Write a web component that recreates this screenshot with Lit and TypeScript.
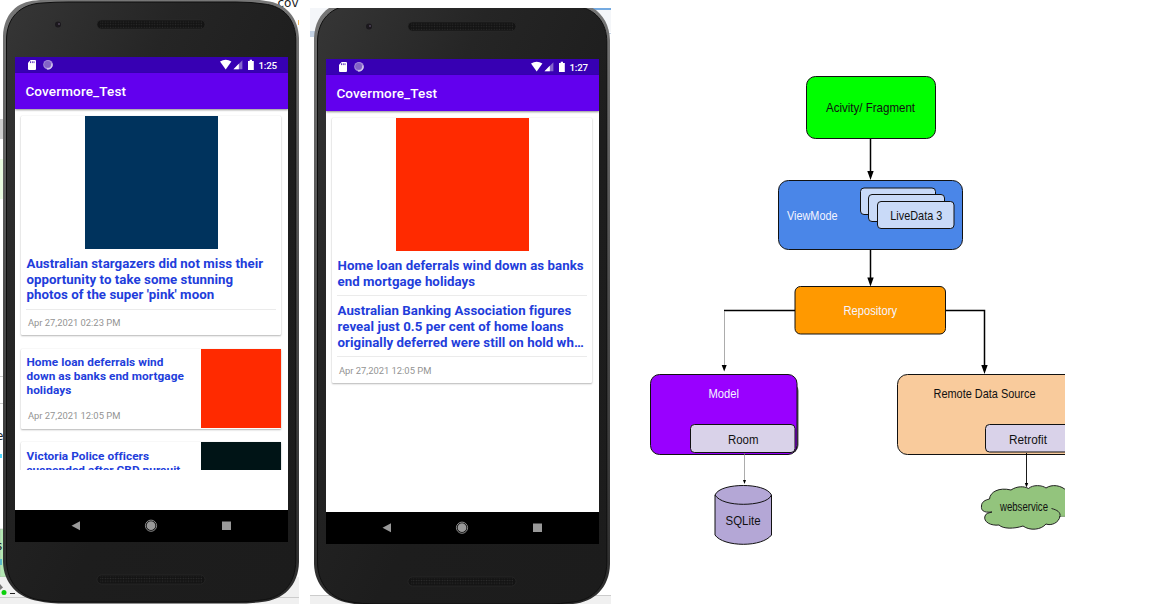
import { LitElement, html, css, svg, nothing } from "lit";
import { customElement, property } from "lit/decorators.js";

interface Story {
  image: string;
  title: string[];
  summary?: string[];
  date: string;
  compact?: boolean;
}

@customElement("news-card")
class NewsCard extends LitElement {
  @property({ attribute: false }) story!: Story;

  static styles = css`
    :host { display: block; flex: none; }
    .card { width: 260px; background: #fff; box-shadow: 0 1px 2px rgba(0,0,0,.28), 0 0 1px rgba(0,0,0,.16); border-radius: 1px; box-sizing: border-box; }
    .full { padding-bottom: 6px; }
    .photo { width: 133px; height: 133px; margin: 0 auto; }
    .lines { color: #223ddb; font-weight: 700; white-space: nowrap; font-size: 13.25px; letter-spacing: .06px; line-height: 15.7px; padding: 7px 0 5.4px 5.1px; }
    .lines.second { padding-top: 7.5px; padding-bottom: 6px; }
    .rule { height: 1px; background: #ebebeb; margin: 0 5px 0 5px; }
    .date { color: #939393; font-size: 9.4px; line-height: 12px; padding: 7.6px 0 0 6.5px; white-space: nowrap; }
    .row { display: flex; height: 80px; }
    .row .copy { width: 180px; display: flex; flex-direction: column; }
    .row .lines { font-size: 11.8px; line-height: 14px; padding: 6.6px 0 0 5.1px; }
    .row .date { padding-top: 12.6px; }
    .thumb { width: 80px; height: 79px; }
  `;

  render() {
    const s = this.story;
    const lines = (l: string[]) => l.map((t) => html`<div>${t}</div>`);
    if (s.compact) {
      return html`<div class="card row">
        <div class="copy"><div class="lines">${lines(s.title)}</div><div class="date">${s.date}</div></div>
        <div class="thumb" style="background:${s.image}"></div>
      </div>`;
    }
    return html`<div class="card full">
      <div class="photo" style="background:${s.image}"></div>
      <div class="lines">${lines(s.title)}</div>
      <div class="rule"></div>
      ${s.summary ? html`<div class="lines second">${lines(s.summary)}</div><div class="rule"></div>` : nothing}
      <div class="date">${s.date}</div>
    </div>`;
  }
}

@customElement("phone-frame")
class PhoneFrame extends LitElement {
  @property() time = "";
  @property({ attribute: false }) stories: Story[] = [];

  static styles = css`
    :host { display: block; width: 299px; height: 604px; font-family: Roboto, sans-serif; }
    .phone { display: grid; width: 299px; height: 604px; }
    .shell, .inner { grid-area: 1 / 1; }
    .shell { display: block; }
    .inner { padding: 57px 11px 62px 15px; }
    .screen { width: 273px; height: 485px; background: #fff; display: flex; flex-direction: column; overflow: hidden; }
    .status { height: 16px; flex: none; background: #3700b3; }
    .status svg { display: block; }
    .clock { font: 500 9.8px Roboto, sans-serif; fill: #fff; }
    .bar { height: 36px; flex: none; background: #6200ee; box-shadow: 0 1px 2px rgba(0,0,0,.45); color: #fff; font-weight: 500; font-size: 13.5px; letter-spacing: .16px; line-height: 37px; padding-left: 10.4px; }
    .feed { height: 361px; flex: none; overflow: hidden; display: flex; flex-direction: column; gap: 13.6px; padding: 7px 0 0 6.4px; box-sizing: border-box; }
    .nav { height: 32px; flex: none; margin-top: auto; background: #000; }
    .nav svg { display: block; }
  `;

  render() {
    const body = "M3 36 C4 14 17 1.5 36 .5 Q45 -.8 62 -1 L240 -1 Q258 -.8 266 1 C286 3 298.5 18 299 38 V562 C298.5 586 283 600 262 602 Q250 603.6 236 603.6 H66 Q50 603.6 38 601 C18 598 3.5 583 3 562Z";
    const speaker = (y: number) => svg`<rect x="97" y=${y} width="108" height="9" rx="4.5" fill="#141414" stroke="#2d2d2d" stroke-width=".6"/>
      <rect x="100" y=${y + 1} width="102" height="7" fill="url(#dots)"/>`;
    return html`<div class="phone">
      <svg class="shell" width="299" height="604">
        <defs>
          <linearGradient id="metal" x1="0" y1="0" x2="0" y2="1"><stop offset="0" stop-color="#777"/><stop offset=".5" stop-color="#4c4c4c"/><stop offset="1" stop-color="#2c2c2c"/></linearGradient>
          <linearGradient id="face" x1="0" y1="0" x2="1" y2="1"><stop offset="0" stop-color="#363636"/><stop offset=".3" stop-color="#252525"/><stop offset=".6" stop-color="#1d1d1d"/><stop offset="1" stop-color="#1c1c1c"/></linearGradient>
          <pattern id="dots" width="2.6" height="2.6" patternUnits="userSpaceOnUse"><circle cx="1.3" cy="1.3" r=".7" fill="#2b2b2b"/></pattern>
        </defs>
        <path d=${body} fill="url(#metal)"/>
        <path d="M6.5 40 C6.5 18 20 4 42 3 Q55 2 68 2 L236 2 Q252 2 264 4 C284 6 295.8 20 295.8 40 V560 C295.8 584 282 598 262 600 Q250 602 236 602 H66 Q50 602 40 600 C20 597 6.5 582 6.5 560Z" fill="url(#face)" stroke="#0f0f0f" stroke-width="1"/>
        <circle cx="57.5" cy="24.5" r="5" fill="#303030"/><circle cx="58" cy="24.5" r="3" fill="#1b181d"/><circle cx="59" cy="24" r="1" fill="#514558"/>
        ${speaker(20)}${speaker(575)}
      </svg>
      <div class="inner"><div class="screen">
        <div class="status"><svg width="273" height="16">
          <path d="M15.7 3 H20 Q21 3 21 4 V12 Q21 13 20 13 H14 Q13 13 13 12 V5.7Z" fill="#fff"/>
          <path d="M15.5 4.3v1.8M17.3 4.3v1.8M19 4.3v1.8" stroke="#3700b3" stroke-width=".8"/>
          <circle cx="33" cy="7.7" r="4.8" fill="#a58cda"/><circle cx="32.6" cy="7.3" r="3.4" fill="#8262c6"/><path d="M36.9 6.5A4.2 4.2 0 0 1 32 11.8" fill="none" stroke="#d9d0f0" stroke-width="1.2"/>
          <path d="M205 4.6 Q210.7 .8 216.4 4.6 L210.7 12.4Z" fill="#fff"/>
          <path d="M218.5 12.2 L227.4 3.2 V12.2Z" fill="#8466cb"/><path d="M218.5 12.2 L223.8 6.8 V12.2Z" fill="#fff"/>
          <path d="M233 4H234.7V2.7H237V4H238.8V13H233Z" fill="#fff"/>
          <text class="clock" x="243.5" y="11.5" textLength="18.6">${this.time}</text>
        </svg></div>
        <div class="bar">Covermore_Test</div>
        <div class="feed">${this.stories.map((s) => html`<news-card .story=${s}></news-card>`)}</div>
        <div class="nav"><svg width="273" height="32">
          <path d="M56.5 15.7 L65 11.2V20.2Z" fill="#999"/>
          <circle cx="136" cy="15.7" r="5.6" fill="none" stroke="#999" stroke-width=".9"/><circle cx="136" cy="15.7" r="4.4" fill="#999"/>
          <rect x="207" y="11.5" width="9" height="8.5" fill="#999"/>
        </svg></div>
      </div></div>
    </div>`;
  }
}

@customElement("architecture-diagram")
class ArchitectureDiagram extends LitElement {
  static styles = css`
    :host { display: block; width: 454px; height: 604px; }
    svg { display: block; }
    text { font-family: "Liberation Sans", Arial, sans-serif; font-size: 13.6px; fill: #111; }
    .light { fill: #f4f4ff; }
    .small { font-size: 12px; }
    .edge { fill: none; stroke: #000; stroke-width: 1.5; }
    .hair { fill: none; stroke: #888; stroke-width: .7; }
  `;

  private box(x: number, y: number, w: number, h: number, r: number, fill: string) {
    return svg`<rect x=${x} y=${y} width=${w} height=${h} rx=${r} fill=${fill} stroke="#111" stroke-width="1"/>`;
  }
  private label(x: number, y: number, w: number, t: string, c = "") {
    return svg`<text class=${c} x=${x} y=${y} textLength=${w} lengthAdjust="spacingAndGlyphs">${t}</text>`;
  }
  private head(x: number, y: number) {
    return svg`<path d=${`M${x - 3.2} ${y - 9}h6.4L${x} ${y}Z`}/>`;
  }

  render() {
    return html`<svg width="454" height="604" viewBox="611 0 454 604">
      ${this.box(806.5, 76.5, 129, 62, 9, "#00ff00")}
      ${this.label(826, 112, 89, "Acivity/ Fragment")}
      <path class="edge" d="M870.5 139V174"/>${this.head(870.5, 180)}
      ${this.box(778.5, 180.5, 184, 69, 10, "#4a86e8")}
      ${this.label(787, 220, 50.5, "ViewMode", "light")}
      ${this.box(860.5, 188, 75, 26.5, 3.5, "#c9daf8")}
      ${this.box(868.5, 194.5, 76, 27, 3.5, "#c9daf8")}
      ${this.box(877.5, 201.5, 76.5, 27, 3.5, "#c9daf8")}
      ${this.label(890.3, 220, 52, "LiveData 3")}
      <path class="edge" d="M870.5 250V281"/>${this.head(870.5, 286.5)}
      ${this.box(795, 286.5, 150.5, 47.5, 5.5, "#ff9900")}
      ${this.label(843.5, 315, 53.5, "Repository", "light")}
      <path class="edge" d="M795 310.5H724M946 310.5H984.5V368"/>
      <path class="hair" d="M724.5 311V366"/>
      <path d="M721.7 365h5l-2.5 6.5Z"/>${this.head(984.5, 374)}
      <rect x="652.5" y="382" width="146" height="72" rx="9" fill="#555"/>
      ${this.box(650.5, 374.5, 146.5, 80, 9, "#9900ff")}
      ${this.label(708.5, 398, 30.5, "Model", "light")}
      ${this.box(690.5, 424.5, 104.5, 28, 4, "#d9d2e9")}
      ${this.label(728, 444, 30.5, "Room")}
      <path class="hair" d="M744.5 453V481"/><path d="M743 480h3l-1.5 4Z"/>
      <path d="M715 495V535C719 541 731 544.3 743.3 544.3S767 541 771.5 535V495C768 488 755 485.5 743.3 485.5S718 488 715 495Z" fill="#b4a7d6" stroke="#111"/>
      <path d="M715 495C719 501.5 731 504.3 743.3 504.3S769 501.5 771.5 495" fill="none" stroke="#111"/>
      ${this.label(725.5, 524.5, 35, "SQLite")}
      ${this.box(897.5, 374.5, 190, 80, 10, "#f9cb9c")}
      ${this.label(933.5, 398, 102, "Remote Data Source")}
      ${this.box(985.5, 424.5, 95, 27.5, 4, "#d9d2e9")}
      ${this.label(1009, 443.5, 38, "Retrofit")}
      <path d="M989.5 499C990 492 999 487 1011 490C1017 486 1024 486 1028.5 488.5C1033 484.5 1042 485 1046 488C1052 484 1061 485 1067 491V516H1060C1059 523 1051 526 1046 524C1041 530 1030 531 1023 526C1014 529 1003 529 999 525C991 526 983 522 985 516C986 513 989 513 992 512C983 513 981 510 981.5 506C981.5 502 985 500 989.5 499Z" fill="#93c47d" stroke="#222"/>
      <path d="M1051.5 508.5C1057 510 1061 512 1060 517" fill="none" stroke="#222"/>
      <path d="M1060.5 515.8H1066" stroke="#93c47d" stroke-width="1.4"/>
      <path class="edge" style="stroke-width:.9" d="M1026.5 453V484"/><path d="M1024.8 483h3.4l-1.7 4.5Z"/>
      ${this.label(1000, 510.5, 48, "webservice", "small")}
    </svg>`;
  }
}

const loanTitle = ["Home loan deferrals wind down as banks", "end mortgage holidays"];

const firstFeed: Story[] = [
  { image: "#00335d", title: ["Australian stargazers did not miss their", "opportunity to take some stunning", "photos of the super 'pink' moon"], date: "Apr 27,2021 02:23 PM" },
  { image: "#ff2a00", title: ["Home loan deferrals wind", "down as banks end mortgage", "holidays"], date: "Apr 27,2021 12:05 PM", compact: true },
  { image: "#001416", title: ["Victoria Police officers", "suspended after CBD pursuit"], date: "", compact: true },
];
const secondFeed: Story[] = [
  { image: "#ff2a00", title: loanTitle, summary: ["Australian Banking Association figures", "reveal just 0.5 per cent of home loans", "originally deferred were still on hold wh…"], date: "Apr 27,2021 12:05 PM" },
];

@customElement("app-root")
class AppRoot extends LitElement {
  static styles = css`
    :host { display: block; width: 1166px; height: 604px; overflow: hidden; background: #fff; }
    .page { display: flex; height: 604px; }
    .shot { display: grid; overflow: hidden; flex: none; }
    .shot > * { grid-area: 1 / 1; }
    .one { width: 299px; height: 604px; margin-right: 11px; }
    .two { width: 301px; height: 596px; margin-top: 8px; }
    .two phone-frame { margin: -6px 0 0 1px; }
    .desk { display: block; }
    .scrap { font: 12px "DejaVu Sans", sans-serif; fill: #222; }
  `;

  render() {
    return html`<div class="page">
      <div class="shot one">
        <svg class="desk" width="299" height="604">
          <rect y="119" width="6" height="20" fill="#cfcfcf"/><rect y="159" width="6" height="40" fill="#e9fbe0"/>
          <path d="M0 376.5H6M0 403.5H6" stroke="#ccc"/>
          <rect y="529" width="8" height="48" fill="#b4e8b4" stroke="#aaa" stroke-width=".5"/>
          <rect y="577" width="299" height="27" fill="#f0f0f0"/><path d="M0 597.5H299" stroke="#ccc"/>
          <text class="scrap" x="277.5" y="7">cov</text>
          <text class="scrap" x="-4" y="440">e</text><text class="scrap" x="-4" y="550">s</text>
          <rect y="454" width="2" height="4" fill="#4fd8ff"/><rect y="559" width="2" height="6" fill="#5bb8c8"/>
          <path d="M0 584L3 587.5L0 590Z" fill="#777"/><circle cx="4" cy="592.5" r="2.5" fill="#0bd00b"/><path d="M10 593.5h5" stroke="#222"/>
          <path d="M299 20v5" stroke="#f0a020" stroke-width="1.4"/>
        </svg>
        <phone-frame .time=${"1:25"} .stories=${firstFeed}></phone-frame>
      </div>
      <div class="shot two">
        <svg class="desk" width="301" height="596">
          <rect width="301" height="24" fill="#f4f6f9"/><rect y="23" width="20" height="6" fill="#c5d3e5"/>
          <path d="M282 1H301" stroke="#4a90d9" stroke-width="1.5"/><path d="M292 25.5H301" stroke="#c5d3e5"/>
          <rect y="588" width="301" height="8" fill="#f0f0f0"/><path d="M0 587.5H301" stroke="#ccc"/>
        </svg>
        <phone-frame .time=${"1:27"} .stories=${secondFeed}></phone-frame>
      </div>
      <architecture-diagram></architecture-diagram>
    </div>`;
  }
}
